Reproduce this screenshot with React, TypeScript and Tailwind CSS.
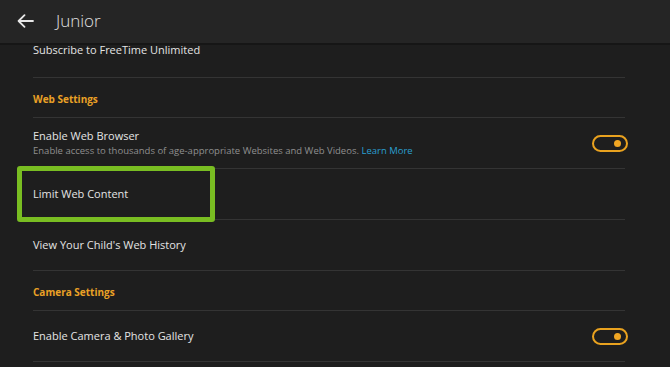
import React from "react";

const font = { fontFamily: '"Open Sans", "Noto Sans", sans-serif' };

function Divider() {
  return <div className="mr-[3px] h-px bg-[#343434]" />;
}

function Toggle() {
  return (
    <div className="flex h-[17px] w-[36px] items-center justify-end rounded-full border-2 border-[#e9a21f] pr-[5px]">
      <div className="h-[7px] w-[7px] rounded-full bg-[#f0a623]" />
    </div>
  );
}

export default function App() {
  return (
    <div className="relative h-[367px] w-[670px] overflow-hidden bg-[#1e1e1e]" style={font}>
      <header className="flex h-[45px] items-center border-b-2 border-[#161616] bg-[#252525]">
        <svg className="ml-[17px] mt-[-1px]" width="17" height="14" viewBox="0 0 17 14" fill="none">
          <path d="M16 7H2M7.5 1.2L1.6 7l5.9 5.8" stroke="#e8e8e8" strokeWidth="1.8" strokeLinecap="round" strokeLinejoin="round" />
        </svg>
        <span className="ml-[22px] mt-[-2px] text-[17px] font-light leading-none text-[#e0e0e0]">Junior</span>
      </header>
      <div className="flex flex-col pl-[33px] pr-[42px]">
        <div className="flex h-[32px] items-start">
          <span className="mt-[-1px] text-[11px] leading-[12px] text-[#e4e4e4]">Subscribe to FreeTime Unlimited</span>
        </div>
        <Divider />
        <div className="flex h-[39px] items-center pt-[3px]">
          <span className="text-[10px] font-bold text-[#eaa126]">Web Settings</span>
        </div>
        <Divider />
        <div className="flex h-[50px] items-center justify-between">
          <div className="flex flex-col">
            <span className="text-[11px] leading-[15px] text-[#e4e4e4]">Enable Web Browser</span>
            <span className="text-[9.5px] leading-[16px] text-[#8f8f8f]">
              Enable access to thousands of age-appropriate Websites and Web Videos.{" "}
              <span className="text-[#2a9fd0]">Learn More</span>
            </span>
          </div>
          <Toggle />
        </div>
        <Divider />
        <div className="flex h-[50px] items-center">
          <span className="text-[11px] text-[#e4e4e4]">Limit Web Content</span>
        </div>
        <Divider />
        <div className="flex h-[50px] items-center">
          <span className="text-[11px] text-[#e4e4e4]">View Your Child's Web History</span>
        </div>
        <Divider />
        <div className="flex h-[39px] items-center pt-[3px]">
          <span className="text-[10px] font-bold text-[#eaa126]">Camera Settings</span>
        </div>
        <Divider />
        <div className="flex h-[50px] items-center justify-between">
          <span className="text-[11px] text-[#e4e4e4]">Enable Camera &amp; Photo Gallery</span>
          <Toggle />
        </div>
        <Divider />
      </div>
      <div className="absolute left-[17px] top-[166px] h-[56px] w-[198px] rounded-[3px] border-[5px] border-[#79bd22]" />
    </div>
  );
}
